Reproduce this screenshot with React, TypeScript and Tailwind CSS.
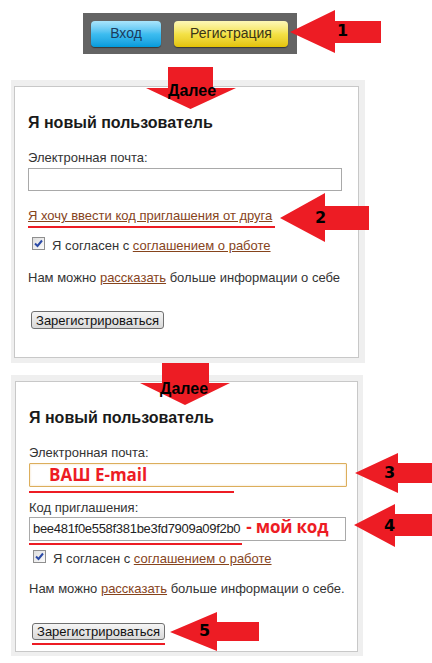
import React from "react";

function CheckBox() {
  return (
    <span className="-mt-[1px] flex h-[13px] w-[13px] shrink-0 items-center justify-center border border-[#8f8f8f] bg-linear-to-br from-[#dedede] to-[#fbfbfb]">
      <svg width="11" height="11" viewBox="0 0 11 11">
        <path d="M2 5.5 L4.5 8 L9 2.5" fill="none" stroke="#2b4aa6" strokeWidth="2" />
      </svg>
    </span>
  );
}

function GrayButton() {
  return (
    <div className="flex h-full w-[133px] items-center justify-center rounded-[3px] border border-[#707070] bg-linear-to-b from-[#f5f5f5] to-[#d9d9d9] text-[13px] leading-none text-[#111]">
      Зарегистрироваться
    </div>
  );
}

export default function App() {
  return (
    <div className="relative h-[663px] w-[432px] overflow-hidden bg-white font-['Liberation_Sans',Arial,sans-serif] text-[#333]">
      {/* top bar */}
      <div className="ml-[83px] mt-[13px] flex h-[41px] w-[214px] items-center gap-[13px] bg-[#646464] pl-[8px]">
        <div className="flex h-[26px] w-[70px] items-center justify-center rounded-[4px] bg-linear-to-b from-[#a9e5fc] via-[#3dbdf0] to-[#009bdb] text-[14px] text-[#1c3b5c] shadow-[0_1px_1px_rgba(0,0,0,0.45)]">
          Вход
        </div>
        <div className="flex h-[26px] w-[114px] items-center justify-center rounded-[4px] bg-linear-to-b from-[#fdf8b6] via-[#f4e246] to-[#e3c300] text-[14px] text-[#3a3418] shadow-[0_1px_1px_rgba(0,0,0,0.45)]">
          Регистрация
        </div>
      </div>

      {/* panel 1 */}
      <div className="ml-[11px] mt-[26px] w-[354px] bg-[#efefef] pb-[5px] pl-[3px] pr-[6px] pt-[6px]">
        <div className="h-[272px] border border-[#c8c8c8] bg-white pl-[13px] pt-[27px]">
          <div className="text-[16px] font-bold leading-[18px] text-[#1a1a1a]">Я новый пользователь</div>
          <div className="mt-[18px] text-[13px] leading-[15px]">Электронная почта:</div>
          <div className="mt-[3px] h-[23px] w-[314px] border border-[#a9a9a9] bg-white" />
          <div className="mt-[17px] text-[13px] leading-[15px] text-[#86441c]">
            <span className="underline">Я хочу ввести код приглашения от друга</span>
          </div>
          <div className="mt-[3px] h-[2px] w-[247px] bg-[#ed1c24]" />
          <div className="mt-[10px] flex h-[15px] items-start pl-[4px] text-[13px] leading-[15px]">
            <CheckBox />
            <span className="ml-[7px]">
              Я согласен с <span className="text-[#86441c] underline">соглашением о работе</span>
            </span>
          </div>
          <div className="mt-[17px] text-[13px] leading-[15px]">
            Нам можно <span className="text-[#86441c] underline">рассказать</span> больше информации о себе
          </div>
          <div className="ml-[3px] mt-[26px] h-[18px]">
            <GrayButton />
          </div>
        </div>
      </div>

      {/* panel 2 */}
      <div className="ml-[11px] mt-[12px] w-[352px] bg-[#efefef] pb-[4px] pl-[4px] pr-[5px] pt-[6px]">
        <div className="h-[271px] border border-[#c8c8c8] bg-white pl-[13px] pt-[27px]">
          <div className="text-[16px] font-bold leading-[18px] text-[#1a1a1a]">Я новый пользователь</div>
          <div className="mt-[18px] text-[13px] leading-[15px]">Электронная почта:</div>
          <div className="mt-[3px] h-[24px] w-[318px] rounded-[1px] border border-[#dcae5c] bg-white pl-[19px] shadow-[inset_0_0_2px_rgba(230,180,90,0.5)]">
            <span className="font-['Open_Sans',sans-serif] text-[17px] font-bold leading-[20px] text-[#ed1c24]">
              ВАШ E-mail
            </span>
          </div>
          <div className="mt-[4px] h-[2px] w-[205px] bg-[#ed1c24]" />
          <div className="mt-[7px] text-[13px] leading-[15px]">Код приглашения:</div>
          <div className="mt-[2px] flex h-[24px] w-[317px] items-baseline border border-[#a9a9a9] bg-white pl-[3px]">
            <span className="text-[13px] leading-[15px] tracking-[-0.3px] text-[#222]">bee481f0e558f381be3fd7909a09f2b0</span>
            <span className="ml-[6px] font-['Open_Sans',sans-serif] text-[17px] font-bold leading-[17px] tracking-[-0.2px] text-[#ed1c24]">
              - мой код
            </span>
          </div>
          <div className="mt-[2px] h-[2px] w-[213px] bg-[#ed1c24]" />
          <div className="mt-[6px] flex h-[15px] items-start pl-[4px] text-[13px] leading-[15px]">
            <CheckBox />
            <span className="ml-[7px]">
              Я согласен с <span className="text-[#86441c] underline">соглашением о работе</span>
            </span>
          </div>
          <div className="mt-[15px] text-[13px] leading-[15px]">
            Нам можно <span className="text-[#86441c] underline">рассказать</span> больше информации о себе.
          </div>
          <div className="ml-[3px] mt-[27px] h-[17px]">
            <GrayButton />
          </div>
          <div className="ml-[3px] mt-[3px] h-[2px] w-[133px] bg-[#ed1c24]" />
        </div>
      </div>

      {/* annotation arrows */}
      <svg className="pointer-events-none absolute left-0 top-0" width="432" height="663" viewBox="0 0 432 663">
        <g fill="#ed1c24">
          <polygon points="290,32 335,10 335,21 381,21 381,43 335,43 335,53" />
          <polygon points="280,218 325,193 325,206 369,206 369,230 325,230 325,242" />
          <polygon points="355,473 398,453 398,463 432,463 432,483 398,483 398,493" />
          <polygon points="354,525 395,504 395,514 432,514 432,536 395,536 395,547" />
          <polygon points="170,632 217,612 217,622 259,622 259,641 217,641 217,651" />
          <polygon points="168,67 213,67 213,88 236,88 190.5,109 146,88 168,88" />
          <polygon points="162,363 209,363 209,383 230,383 185,405 140,383 162,383" />
        </g>
      </svg>

      <div className="absolute left-[168px] top-[82px] text-[16px] font-bold leading-[18px] text-black">Далее</div>
      <div className="absolute left-[160px] top-[380px] text-[16px] font-bold leading-[18px] text-black">Далее</div>

      <div className="absolute left-[337px] top-[23px] font-['DejaVu_Sans',sans-serif] text-[16px] font-bold leading-none text-black">1</div>
      <div className="absolute left-[315px] top-[210px] font-['DejaVu_Sans',sans-serif] text-[16px] font-bold leading-none text-black">2</div>
      <div className="absolute left-[384px] top-[465px] font-['DejaVu_Sans',sans-serif] text-[16px] font-bold leading-none text-black">3</div>
      <div className="absolute left-[384px] top-[518px] font-['DejaVu_Sans',sans-serif] text-[16px] font-bold leading-none text-black">4</div>
      <div className="absolute left-[199px] top-[623px] font-['DejaVu_Sans',sans-serif] text-[16px] font-bold leading-none text-black">5</div>
    </div>
  );
}
